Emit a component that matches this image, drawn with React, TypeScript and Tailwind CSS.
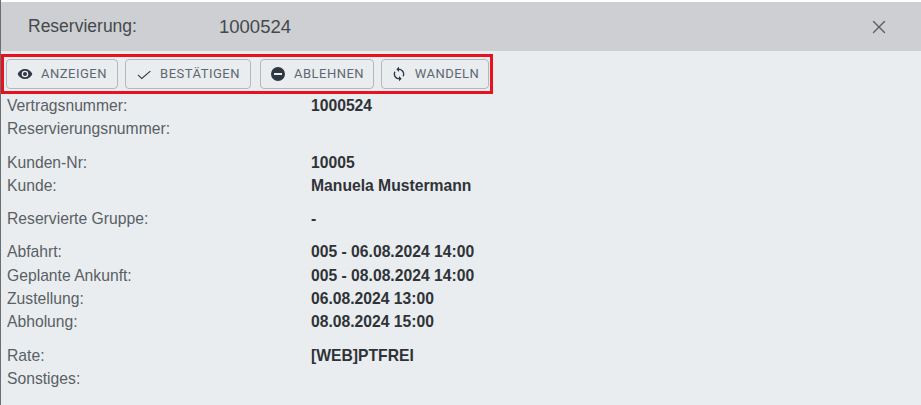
import { X } from 'lucide-react';

function MinusIcon() {
  return (
    <svg width="16" height="16" viewBox="0 0 24 24">
      <path fill="#2f3740" d="M12 1.5a10.5 10.5 0 1 0 0 21 10.5 10.5 0 0 0 0-21zm6 12H6v-3h12v3z" />
    </svg>
  );
}

function EyeIcon() {
  return (
    <svg width="16" height="16" viewBox="0 0 24 24">
      <path
        fill="#2f3740"
        d="M12 4.5C7 4.5 2.73 7.61 1 12c1.73 4.39 6 7.5 11 7.5s9.27-3.11 11-7.5c-1.73-4.39-6-7.5-11-7.5zM12 17a5 5 0 1 1 0-10 5 5 0 0 1 0 10zm0-8a3 3 0 1 0 0 6 3 3 0 0 0 0-6z"
      />
    </svg>
  );
}

function CheckIcon() {
  return (
    <svg width="16" height="16" viewBox="0 0 24 24">
      <path fill="#2f3740" d="M8.6 20 2.4 13.8l1.1-1.1 5.1 5.1L21 7l1.1 1.1z" />
    </svg>
  );
}

function SyncIcon() {
  return (
    <svg width="16" height="16" viewBox="0 0 24 24">
      <path
        fill="#2f3740"
        d="M12 4V1L8 5l4 4V6c3.31 0 6 2.69 6 6 0 1.01-.25 1.97-.7 2.8l1.46 1.46A7.93 7.93 0 0 0 20 12c0-4.42-3.58-8-8-8zm0 14c-3.31 0-6-2.69-6-6 0-1.01.25-1.97.7-2.8L5.24 7.74A7.93 7.93 0 0 0 4 12c0 4.42 3.58 8 8 8v3l4-4-4-4v3z"
      />
    </svg>
  );
}

const rowGroups = [
  [
    ['Vertragsnummer:', '1000524'],
    ['Reservierungsnummer:', ''],
  ],
  [
    ['Kunden-Nr:', '10005'],
    ['Kunde:', 'Manuela Mustermann'],
  ],
  [['Reservierte Gruppe:', '-']],
  [
    ['Abfahrt:', '005 - 06.08.2024 14:00'],
    ['Geplante Ankunft:', '005 - 08.08.2024 14:00'],
    ['Zustellung:', '06.08.2024 13:00'],
    ['Abholung:', '08.08.2024 15:00'],
  ],
  [
    ['Rate:', '[WEB]PTFREI'],
    ['Sonstiges:', ''],
  ],
];

function ActionButton({ icon, label, className }: { icon: React.ReactNode; label: string; className: string }) {
  return (
    <button className={`flex h-[30px] items-center justify-center gap-[8px] rounded border border-[#b4b8bc] text-[13px] tracking-[0.5px] text-[#5f6771] ${className}`}>
      {icon}
      <span>{label}</span>
    </button>
  );
}

export default function App() {
  return (
    <div className="h-[405px] w-[921px] overflow-hidden border-l border-[#6b6f73] bg-white pt-[2px] font-['Liberation_Sans',sans-serif]">
      <div className="flex h-[49px] items-center justify-between bg-[#cdcfd2] pl-[27px] pr-[31px] text-[#45494d]">
        <div className="flex items-center">
          <span className="w-[191px] text-[17.5px]">Reservierung:</span>
          <span className="text-[18.5px]">1000524</span>
        </div>
        <X size={22} strokeWidth={1.5} color="#5a5e63" />
      </div>
      <div className="h-[354px] bg-[#e9edf0] pt-[3px]">
        <div className="flex h-[40px] w-[492px] items-center border-[3px] border-[#e8121f] pl-[2px] font-['Roboto',sans-serif]">
          <ActionButton icon={<EyeIcon />} label="ANZEIGEN" className="w-[112px]" />
          <ActionButton icon={<CheckIcon />} label="BESTÄTIGEN" className="ml-[7px] w-[126px]" />
          <ActionButton icon={<MinusIcon />} label="ABLEHNEN" className="ml-[9px] w-[114px]" />
          <ActionButton icon={<SyncIcon />} label="WANDELN" className="ml-[7px] w-[108px]" />
        </div>
        <div className="flex flex-col gap-[10px] pl-[6px] text-[15.7px] leading-[23.3px]">
          {rowGroups.map((group, i) => (
            <div key={i}>
              {group.map(([label, value]) => (
                <div key={label} className="flex h-[23.3px]">
                  <span className="w-[304px] text-[#5a5f64]">{label}</span>
                  <span className="font-bold text-[#2f3337]">{value}</span>
                </div>
              ))}
            </div>
          ))}
        </div>
      </div>
    </div>
  );
}
